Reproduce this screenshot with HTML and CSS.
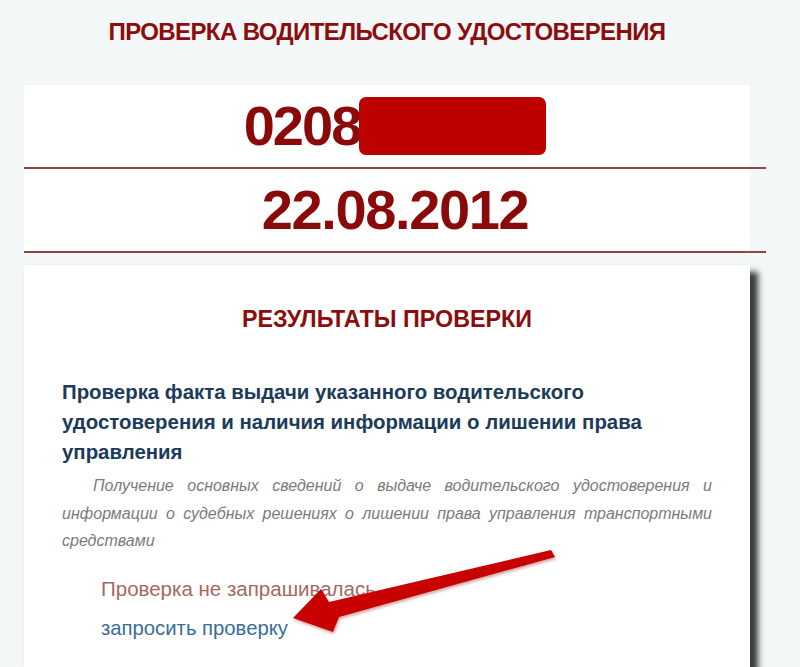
FILE: index.html
```html
<!DOCTYPE html>
<html lang="ru">
<head>
<meta charset="utf-8">
<title>Проверка водительского удостоверения</title>
<link rel="stylesheet" href="styles.css">
</head>
<body>
<div class="page">
  <h1 class="title">ПРОВЕРКА ВОДИТЕЛЬСКОГО УДОСТОВЕРЕНИЯ</h1>
  <div class="doc">
    <div class="doc-row"><span class="doc-num">0208</span><span class="redact"></span></div>
    <div class="doc-row"><span class="doc-num date">22.08.2012</span></div>
  </div>
  <div class="card">
    <h2 class="card-title">РЕЗУЛЬТАТЫ ПРОВЕРКИ</h2>
    <h3 class="check-title">Проверка факта выдачи указанного водительского удостоверения и наличия информации о лишении права управления</h3>
    <p class="check-desc">Получение основных сведений о выдаче водительского удостоверения и информации о судебных решениях о лишении права управления транспортными средствами</p>
    <div class="status">Проверка не запрашивалась</div>
    <a class="request" href="#">запросить проверку</a>
  </div>
</div>
<svg class="arrow" width="800" height="667" viewBox="0 0 800 667" aria-hidden="true">
  <defs>
    <filter id="sh" x="-10%" y="-10%" width="120%" height="130%">
      <feDropShadow dx="1" dy="2" stdDeviation="1.5" flood-color="#700" flood-opacity="0.35"/>
    </filter>
  </defs>
  <polygon filter="url(#sh)" fill="#c80000" points="293,618 321,589 329,602 551,550 555,557 339,617 333,632"/>
</svg>
</body>
</html>
```

FILE: styles.css
```css
html, body {
  margin: 0;
  padding: 0;
}
body {
  background: #f4f7f7;
  font-family: "Liberation Sans", Arial, sans-serif;
  width: 800px;
  height: 667px;
  overflow: hidden;
}
.page {
  margin-left: 24px;
  width: 726px;
}
.title {
  margin: 0;
  padding-top: 18px;
  height: 28px;
  margin-bottom: 39px;
  font-size: 24px;
  line-height: 28px;
  font-weight: bold;
  letter-spacing: -0.6px;
  color: #8b0d0d;
  text-align: center;
}
.doc {
  background: #fff;
}
.doc-row {
  margin-right: -16px;
  height: 82px;
  border-bottom: 2px solid #8a4848;
  display: flex;
  align-items: center;
  justify-content: center;
}
.doc-num {
  font-size: 56px;
  font-weight: bold;
  color: #8a0a0a;
  letter-spacing: -2px;
  line-height: 82px;
}
.date {
  letter-spacing: -1.4px;
}
.redact {
  display: inline-block;
  width: 187px;
  height: 58px;
  margin-left: -1px;
  border-radius: 7px;
  background: #bd0000;
}
.card {
  margin-top: 12px;
  background: #fff;
  padding: 39px 38px 0 38px;
  box-shadow: 8px 7px 6px rgba(25, 25, 25, 0.85), 0 0 2px rgba(0,0,0,0.06);
  height: 363px;
}
.card-title {
  margin: 0;
  font-size: 23.3px;
  line-height: 30px;
  font-weight: bold;
  color: #8b0d0d;
  text-align: center;
}
.check-title {
  margin: 43px 0 0 0;
  max-width: 600px;
  font-size: 20.4px;
  line-height: 30px;
  font-weight: bold;
  color: #1c3b5a;
}
.check-desc {
  margin: 5px 0 0 0;
  font-size: 16px;
  line-height: 27.5px;
  font-style: italic;
  color: #7b7b7b;
  text-align: justify;
  text-indent: 31px;
}
.status {
  margin: 22px 0 0 39px;
  font-size: 20.5px;
  line-height: 24px;
  color: #a4695e;
}
.request {
  display: inline-block;
  margin: 15px 0 0 39px;
  font-size: 20.3px;
  line-height: 24px;
  color: #3b6c9b;
  text-decoration: none;
}
.arrow {
  position: absolute;
  left: 0;
  top: 0;
  pointer-events: none;
}
```
